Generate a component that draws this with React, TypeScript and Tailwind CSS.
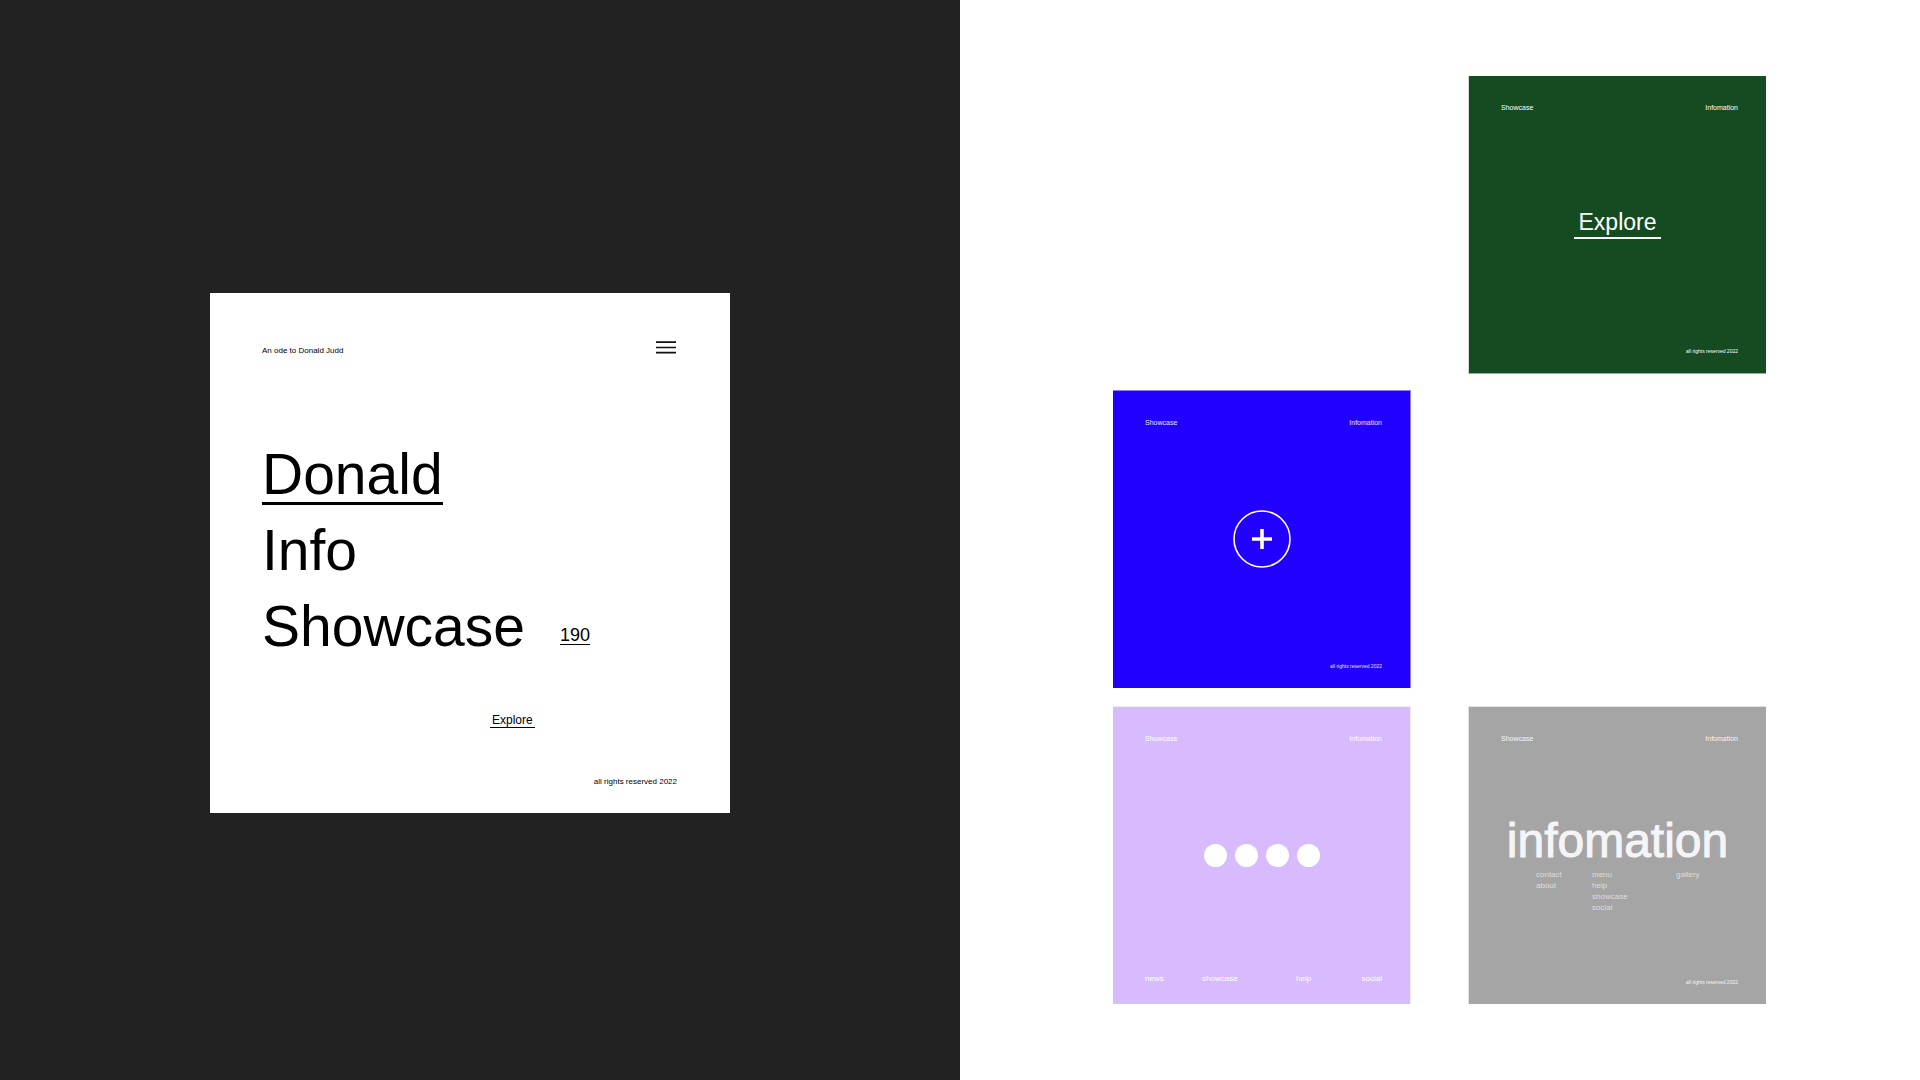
import React from 'react';

interface CardProps {
  className: string;
  textClass?: string;
  footer?: React.ReactNode;
  children: React.ReactNode;
}

const menuColumns = [
  ['contact', 'about'],
  ['menu', 'help', 'showcase', 'social'],
  ['gallery'],
];

const Copyright: React.FC = () => (
  <footer className="flex h-[39px] items-end justify-end pb-[18px] pr-[28px] text-[5px] leading-[8px]">
    all rights reserved 2022
  </footer>
);

const Card: React.FC<CardProps> = ({ className, textClass = 'text-white', footer, children }) => (
  <article className={`flex h-[298px] flex-col ${textClass} ${className}`}>
    <nav className="flex h-[37px] items-end justify-between pl-[32px] pr-[28px] text-[7px] leading-[10px]">
      <a href="#showcase">Showcase</a>
      <a href="#infomation">Infomation</a>
    </nav>
    <div className="flex flex-1 flex-col items-center justify-center">{children}</div>
    {footer ?? <Copyright />}
  </article>
);

const Hero: React.FC = () => (
  <article className="flex h-[520px] w-[520px] flex-col bg-white pb-[25px] pl-[52px] pr-[53px] pt-12 text-black">
    <header className="flex h-4 items-start justify-between">
      <p className="self-end text-[8px] leading-[12px]">An ode to Donald Judd</p>
      <button type="button" aria-label="Menu" className="mr-px">
        <svg width="20" height="13" viewBox="0 0 20 13" className="block" stroke="#111" strokeWidth="1.7">
          <path d="M0 1.2h20M0 6.5h20M0 11.7h20" />
        </svg>
      </button>
    </header>

    <nav className="mt-[90px] flex flex-col items-start gap-[18px] text-[57px] leading-[55px]">
      <a href="#donald" className="border-b-[3px] border-black">Donald</a>
      <a href="#info" className="border-b-[3px] border-transparent">Info</a>
      <div className="flex items-end gap-[35px]">
        <a href="#showcase" className="border-b-[3px] border-transparent">Showcase</a>
        <a href="#works" className="mb-3 border-b border-black text-[18px] leading-[18px]">190</a>
      </div>
    </nav>

    <a
      href="#explore"
      className="ml-[228px] mt-[56px] self-start border-b border-black px-[2px] text-[12px] leading-[14px]"
    >
      Explore
    </a>
    <footer className="mt-auto text-right text-[8px] leading-[12px]">all rights reserved 2022</footer>
  </article>
);

const App: React.FC = () => {
  return (
    <main className="grid min-h-screen grid-cols-2 bg-white font-['Liberation_Sans',Arial,sans-serif]">
      <section className="flex items-center justify-center bg-[#222222] pr-5 pt-[26px]">
        <Hero />
      </section>

      <section className="grid grid-cols-[355px_298px] grid-rows-[314px_316px_298px] content-center items-start justify-center pr-px">
        <Card className="col-start-2 border-b border-l border-b-[#a3a8a4] border-l-[#d5d5d5] bg-[#144b21]">
          <a href="#explore" className="border-b-2 border-white px-[5px] text-[23px] leading-[29px]">
            Explore
          </a>
        </Card>

        <Card
          className="col-start-1 mr-[57px] border-r border-t border-[#8f80ff] bg-[#2200ff]"
          textClass="text-[#e6e2ff]"
        >
          <button type="button" aria-label="Add">
            <svg width="58" height="58" viewBox="0 0 58 58" className="block" fill="none" stroke="#fff">
              <circle cx="29" cy="29" r="28" strokeWidth="1.6" />
              <path d="M29 19v20M19 29h20" strokeWidth="3.6" />
            </svg>
          </button>
        </Card>

        <Card
          className="col-start-1 mr-[57px] border-r border-t border-[#f1ecf4] bg-[#d8bbff]"
          footer={
            <nav className="grid h-[37px] grid-cols-[57px_94px_1fr_auto] items-end pb-[19px] pl-[32px] pr-[28px] text-[8px] leading-[12px]">
              <a href="#news">news</a>
              <a href="#showcase">showcase</a>
              <a href="#help">help</a>
              <a href="#social">social</a>
            </nav>
          }
        >
          <div className="flex gap-2">
            {[1, 2, 3, 4].map((dot) => (
              <span key={dot} className="size-[23px] rounded-full bg-white" />
            ))}
          </div>
        </Card>

        <Card
          className="border-l border-t border-[#e2e2e2] bg-[#a5a5a5]"
          textClass="text-[#f5f5f7]"
        >
          <div className="flex w-full flex-1 flex-col pt-[75px]">
            <h2 className="text-center text-[48px] leading-[44px] [-webkit-text-stroke:1px_#f5f5f7]">
              infomation
            </h2>
            <div className="ml-[67px] mt-[6px] grid grid-cols-[56px_84px_auto] text-[8px] leading-[11px] text-[#dedede]">
              {menuColumns.map((items) => (
                <ul key={items[0]}>
                  {items.map((item) => (
                    <li key={item}>
                      <a href={`#${item}`} className="block">{item}</a>
                    </li>
                  ))}
                </ul>
              ))}
            </div>
          </div>
        </Card>
      </section>
    </main>
  );
};

export default App;
